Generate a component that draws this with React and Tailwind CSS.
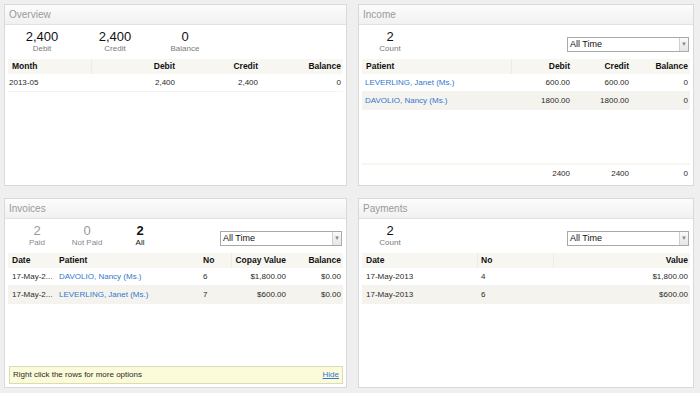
import React from 'react';

const font = { fontFamily: '"Liberation Sans", Arial, sans-serif' };

const Panel = ({ title, children }) => (
    <div className="flex flex-col bg-white border border-[#d9d9d9] overflow-hidden">
        <div className="h-[20px] shrink-0 flex items-center pl-[4px] bg-gradient-to-b from-[#fcfcfc] to-[#f1f1f1] border-b border-[#e2e2e2] text-[10px] text-[#9a9a9a]">
            {title}
        </div>
        <div className="flex-1 flex flex-col px-[3px] min-h-0">{children}</div>
    </div>
);

const Stat = ({ value, label, w, dim, strong }) => (
    <div className={`${w} flex flex-col items-center pt-[5px]`}>
        <span className={`text-[13px] leading-[13px] ${dim ? 'text-[#9a9a9a]' : 'text-[#111]'} ${strong ? 'font-semibold' : ''}`}>{value}</span>
        <span className={`text-[8px] leading-[10px] mt-[1px] ${dim ? 'text-[#8a8a8a]' : strong ? 'text-[#111]' : 'text-[#7a7a7a]'}`}>{label}</span>
    </div>
);

const Select = () => (
    <div className="ml-auto mt-[12px] mr-[1px] w-[122px] h-[15px] flex border border-[#a9a9a9] bg-white">
        <span className="flex-1 text-[9px] leading-[13px] pl-[2px] text-[#111]">All Time</span>
        <span className="w-[9px] flex items-center justify-center border-l border-[#cfcfcf] bg-gradient-to-b from-[#fafafa] to-[#e6e6e6] text-[6px] text-[#888]">▼</span>
    </div>
);

const Head = ({ cols, children }) => (
    <div className={`grid ${cols} h-[15px] items-center bg-[#f7f6f1] text-[8.5px] font-bold text-[#111]`}>{children}</div>
);

const Row = ({ cols, alt, children }) => (
    <div className={`grid ${cols} h-[18px] items-center text-[8px] text-[#2a2a2a] border-b border-[#f3f3f3] ${alt ? 'bg-[#f5f3ee]' : ''}`}>{children}</div>
);

const Link = ({ children }) => <span className="text-[#2f78d0]">{children}</span>;

const ovCols = 'grid-cols-[84px_86px_83px_1fr]';
const inCols = 'grid-cols-[150px_61px_59px_1fr]';
const ivCols = 'grid-cols-[48px_144px_32px_57px_1fr]';
const pyCols = 'grid-cols-[116px_76px_1fr]';

export default function App() {
    return (
        <div style={font} className="w-[700px] h-[393px] bg-[#efefef] pl-[4px] pt-[4px] grid grid-cols-[343px_336px] grid-rows-[182px_190px] gap-x-[11px] gap-y-[12px]">
            <Panel title="Overview">
                <div className="h-[34px] flex -mx-[3px]">
                    <Stat value="2,400" label="Debit" w="w-[74px]" />
                    <Stat value="2,400" label="Credit" w="w-[72px]" />
                    <Stat value="0" label="Balance" w="w-[68px]" />
                </div>
                <Head cols={ovCols}>
                    <span className="pl-[4px] h-full flex items-center border-r border-[#efece4]">Month</span>
                    <span className="text-right pr-[3px]">Debit</span>
                    <span className="text-right pr-[3px]">Credit</span>
                    <span className="text-right pr-[2px]">Balance</span>
                </Head>
                <Row cols={ovCols}>
                    <span className="pl-[1px]">2013-05</span>
                    <span className="text-right pr-[3px]">2,400</span>
                    <span className="text-right pr-[3px]">2,400</span>
                    <span className="text-right pr-[2px]">0</span>
                </Row>
            </Panel>

            <Panel title="Income">
                <div className="h-[34px] flex -ml-[3px]">
                    <Stat value="2" label="Count" w="w-[62px]" />
                    <Select />
                </div>
                <Head cols={inCols}>
                    <span className="pl-[4px] h-full flex items-center border-r border-[#efece4]">Patient</span>
                    <span className="text-right pr-[3px]">Debit</span>
                    <span className="text-right pr-[3px]">Credit</span>
                    <span className="text-right pr-[2px]">Balance</span>
                </Head>
                <Row cols={inCols}>
                    <span className="pl-[3px]"><Link>LEVERLING, Janet (Ms.)</Link></span>
                    <span className="text-right pr-[3px]">600.00</span>
                    <span className="text-right pr-[3px]">600.00</span>
                    <span className="text-right pr-[2px]">0</span>
                </Row>
                <Row cols={inCols} alt>
                    <span className="pl-[3px]"><Link>DAVOLIO, Nancy (Ms.)</Link></span>
                    <span className="text-right pr-[3px]">1800.00</span>
                    <span className="text-right pr-[3px]">1800.00</span>
                    <span className="text-right pr-[2px]">0</span>
                </Row>
                <div className="flex-1" />
                <div className={`grid ${inCols} h-[20px] mb-[2px] items-center text-[8px] text-[#2a2a2a] border-t-2 border-[#f8f6ef]`}>
                    <span />
                    <span className="text-right pr-[3px]">2400</span>
                    <span className="text-right pr-[3px]">2400</span>
                    <span className="text-right pr-[2px]">0</span>
                </div>
            </Panel>

            <Panel title="Invoices">
                <div className="h-[34px] flex -ml-[3px]">
                    <Stat value="2" label="Paid" w="w-[64px]" dim />
                    <Stat value="0" label="Not Paid" w="w-[36px]" dim />
                    <Stat value="2" label="All" w="w-[70px]" strong />
                    <Select />
                </div>
                <Head cols={ivCols}>
                    <span className="pl-[4px]">Date</span>
                    <span className="pl-[3px]">Patient</span>
                    <span className="pl-[3px] h-full flex items-center border-r border-[#efece4]">No</span>
                    <span className="text-right pr-[3px]">Copay Value</span>
                    <span className="text-right pr-[2px]">Balance</span>
                </Head>
                <Row cols={ivCols}>
                    <span className="pl-[4px] whitespace-nowrap overflow-hidden">17-May-2...</span>
                    <span className="pl-[3px]"><Link>DAVOLIO, Nancy (Ms.)</Link></span>
                    <span className="pl-[3px]">6</span>
                    <span className="text-right pr-[3px]">$1,800.00</span>
                    <span className="text-right pr-[2px]">$0.00</span>
                </Row>
                <Row cols={ivCols} alt>
                    <span className="pl-[4px] whitespace-nowrap overflow-hidden">17-May-2...</span>
                    <span className="pl-[3px]"><Link>LEVERLING, Janet (Ms.)</Link></span>
                    <span className="pl-[3px]">7</span>
                    <span className="text-right pr-[3px]">$600.00</span>
                    <span className="text-right pr-[2px]">$0.00</span>
                </Row>
                <div className="flex-1" />
                <div className="h-[18px] mb-[3px] ml-[1px] flex items-center justify-between px-[3px] bg-[#fbfbda] border border-[#dcdcb4] text-[8px] text-[#2a2a2a]">
                    <span>Right click the rows for more options</span>
                    <span className="text-[#2f78d0] underline">Hide</span>
                </div>
            </Panel>

            <Panel title="Payments">
                <div className="h-[34px] flex -ml-[3px]">
                    <Stat value="2" label="Count" w="w-[62px]" />
                    <Select />
                </div>
                <Head cols={pyCols}>
                    <span className="pl-[4px] h-full flex items-center border-r border-[#efece4]">Date</span>
                    <span className="pl-[3px] h-full flex items-center border-r border-[#efece4]">No</span>
                    <span className="text-right pr-[2px]">Value</span>
                </Head>
                <Row cols={pyCols}>
                    <span className="pl-[4px]">17-May-2013</span>
                    <span className="pl-[3px]">4</span>
                    <span className="text-right pr-[2px]">$1,800.00</span>
                </Row>
                <Row cols={pyCols} alt>
                    <span className="pl-[4px]">17-May-2013</span>
                    <span className="pl-[3px]">6</span>
                    <span className="text-right pr-[2px]">$600.00</span>
                </Row>
            </Panel>
        </div>
    );
}
